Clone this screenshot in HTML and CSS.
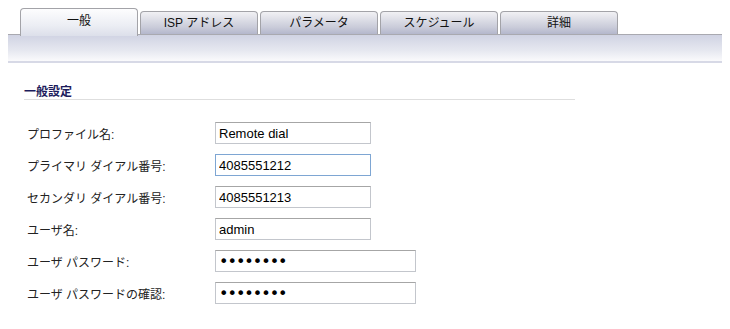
FILE: index.html
```html
<!DOCTYPE html>
<html lang="ja">
<head>
	<meta charset="UTF-8">
	<title>一般設定</title>
	<link rel="stylesheet" href="styles.css">
</head>
<body>
<div class="tabs">
	<ul>
		<li class="active">一般</li>
		<li>ISP アドレス</li>
		<li>パラメータ</li>
		<li>スケジュール</li>
		<li>詳細</li>
	</ul>
	<div class="band"></div>
</div>

<div class="section">
	<h3>一般設定</h3>
	<div class="row">
		<label>プロファイル名:</label>
		<input type="text" value="Remote dial">
	</div>
	<div class="row">
		<label>プライマリ ダイアル番号:</label>
		<input type="text" class="focus" value="4085551212">
	</div>
	<div class="row">
		<label>セカンダリ ダイアル番号:</label>
		<input type="text" value="4085551213">
	</div>
	<div class="row">
		<label>ユーザ名:</label>
		<input type="text" value="admin">
	</div>
	<div class="row">
		<label>ユーザ パスワード:</label>
		<input type="password" class="wide" value="password">
	</div>
	<div class="row">
		<label>ユーザ パスワードの確認:</label>
		<input type="password" class="wide" value="password">
	</div>
</div>
</body>
</html>
```

FILE: styles.css
```css
body{
	margin: 8px;
	font-family: "Liberation Sans", "Noto Sans CJK JP", sans-serif;
	font-size: 12px;
	color: #222;
	background: #fff;
}
.tabs ul{
	margin: 0;
	padding: 0 0 0 12px;
	display: flex;
	align-items: flex-end;
	gap: 2px;
	height: 26px;
}
.tabs ul li{
	list-style: none;
	width: 116px;
	height: 22px;
	line-height: 22px;
	text-align: center;
	color: #111;
	border: 1px solid #a3a3a8;
	border-bottom: none;
	border-radius: 4px 4px 0 0;
	background: linear-gradient(#f1f1f4, #c9cbd9 70%, #b4b7cc);
}
.tabs ul li.active{
	line-height: 24px;
	background: linear-gradient(#fdfdfe, #eceef4 60%, #dcdfea);
	position: relative;
	z-index: 1;
	margin-bottom: -2px;
	height: 27px;
}
.band{
	width: 718px;
	height: 26px;
	border-top: 1px solid #a9a9b0;
	border-bottom: 2px solid #d7d9e6;
	background: linear-gradient(#d0d3e3, #e6e8f0 60%, #fafafc);
}
.section{
	padding: 22px 0 0 16px;
}
.section h3{
	margin: 0 0 17px 0;
	width: 551px;
	height: 14px;
	line-height: 14px;
	font-size: 12px;
	font-weight: bold;
	color: #1c1c5c;
	border-bottom: 1px solid #dedede;
}
.row{
	display: flex;
	align-items: center;
	height: 32px;
	padding-left: 3px;
}
.row label{
	width: 188px;
	color: #222;
}
.row input{
	box-sizing: border-box;
	width: 156px;
	height: 22px;
	padding: 0 3px;
	border: 1px solid #c3c6cc;
	border-top-color: #a6a6a6;
	font-family: "Liberation Sans", sans-serif;
	font-size: 13px;
	color: #000;
	outline: none;
}
.row input.focus{
	border-color: #7ea6d3;
}
.row input.wide{
	width: 201px;
	font-family: "DejaVu Sans", sans-serif;
	font-size: 16px;
	letter-spacing: -1px;
}
```
